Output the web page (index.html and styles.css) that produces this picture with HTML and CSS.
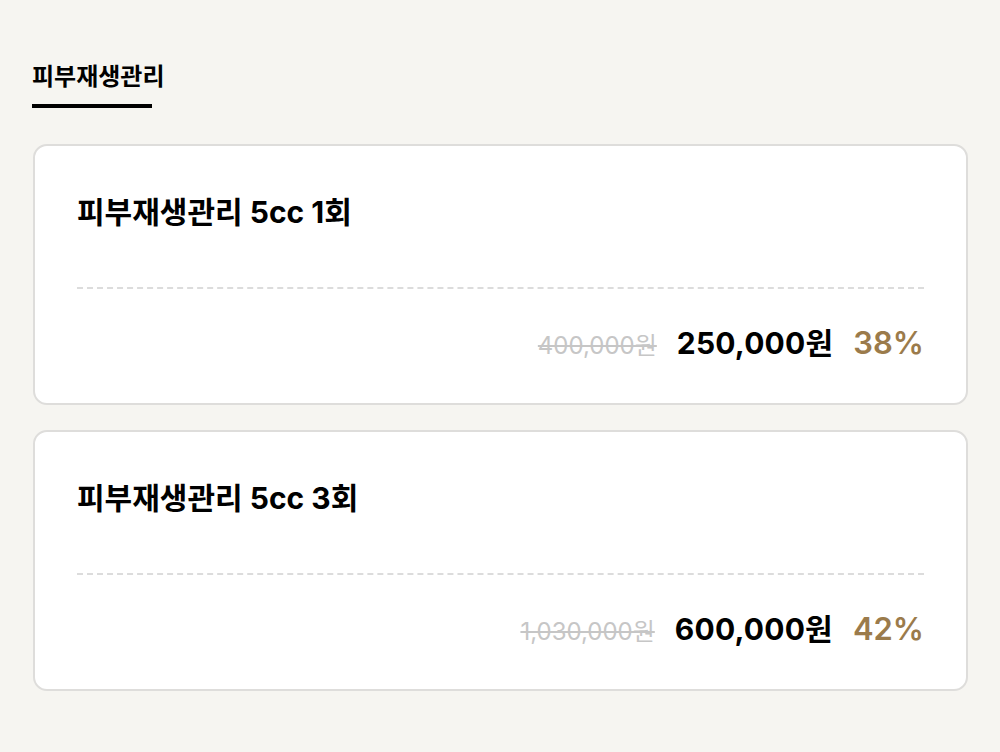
FILE: index.html
```html
<!DOCTYPE html>
<html lang="ko">
<head>
    <meta charset="UTF-8">
    <meta name="viewport" content="width=device-width, initial-scale=1.0">
    <title>피부재생관리</title>
    <link rel="stylesheet" href="styles.css">
</head>
<body>
    <div class="page">
        <div class="tabs">
            <div class="tab active">피부재생관리</div>
        </div>

        <div class="product-list">
            <div class="product">
                <div class="product-name">피부재생관리 5cc 1회</div>
                <div class="price-row">
                    <span class="price-old">400,000원</span>
                    <span class="price">250,000원</span>
                    <span class="discount">38%</span>
                </div>
            </div>
            <div class="product">
                <div class="product-name">피부재생관리 5cc 3회</div>
                <div class="price-row">
                    <span class="price-old">1,030,000원</span>
                    <span class="price">600,000원</span>
                    <span class="discount">42%</span>
                </div>
            </div>
        </div>
    </div>
</body>
</html>
```

FILE: styles.css
```css
body {
    margin: 0;
    background-color: #f6f5f1;
    font-family: Inter, "Noto Sans CJK KR", sans-serif;
    color: #000;
}

.page {
    padding: 61px 32px 0 33px;
}

.tabs {
    display: flex;
}

.tab {
    font-size: 24px;
    font-weight: 700;
    line-height: 32px;
    height: 32px;
    padding-bottom: 11px;
    border-bottom: 4px solid #000;
    width: 120px;
    white-space: nowrap;
    margin-left: -1px;
}

.product-list {
    display: flex;
    flex-direction: column;
    gap: 25px;
    margin-top: 36px;
}

.product {
    background-color: #fff;
    border: 2px solid #dedddb;
    border-radius: 14px;
    padding: 48px 42px 40px;
}

.product-name {
    font-size: 30px;
    font-weight: 700;
    line-height: 36px;
    height: 36px;
    padding-bottom: 57px;
    border-bottom: 2px dashed #dcdcdc;
}

.price-row {
    display: flex;
    justify-content: flex-end;
    align-items: baseline;
    gap: 20px;
    margin-top: 34px;
    line-height: 40px;
    height: 40px;
}

.price-old {
    font-size: 24px;
    color: #c6c6c6;
    text-decoration: line-through;
}

.price {
    font-size: 30px;
    font-weight: 700;
    letter-spacing: 0.2px;
}

.discount {
    font-size: 31px;
    font-weight: 600;
    color: #9b7b4b;
}
```
